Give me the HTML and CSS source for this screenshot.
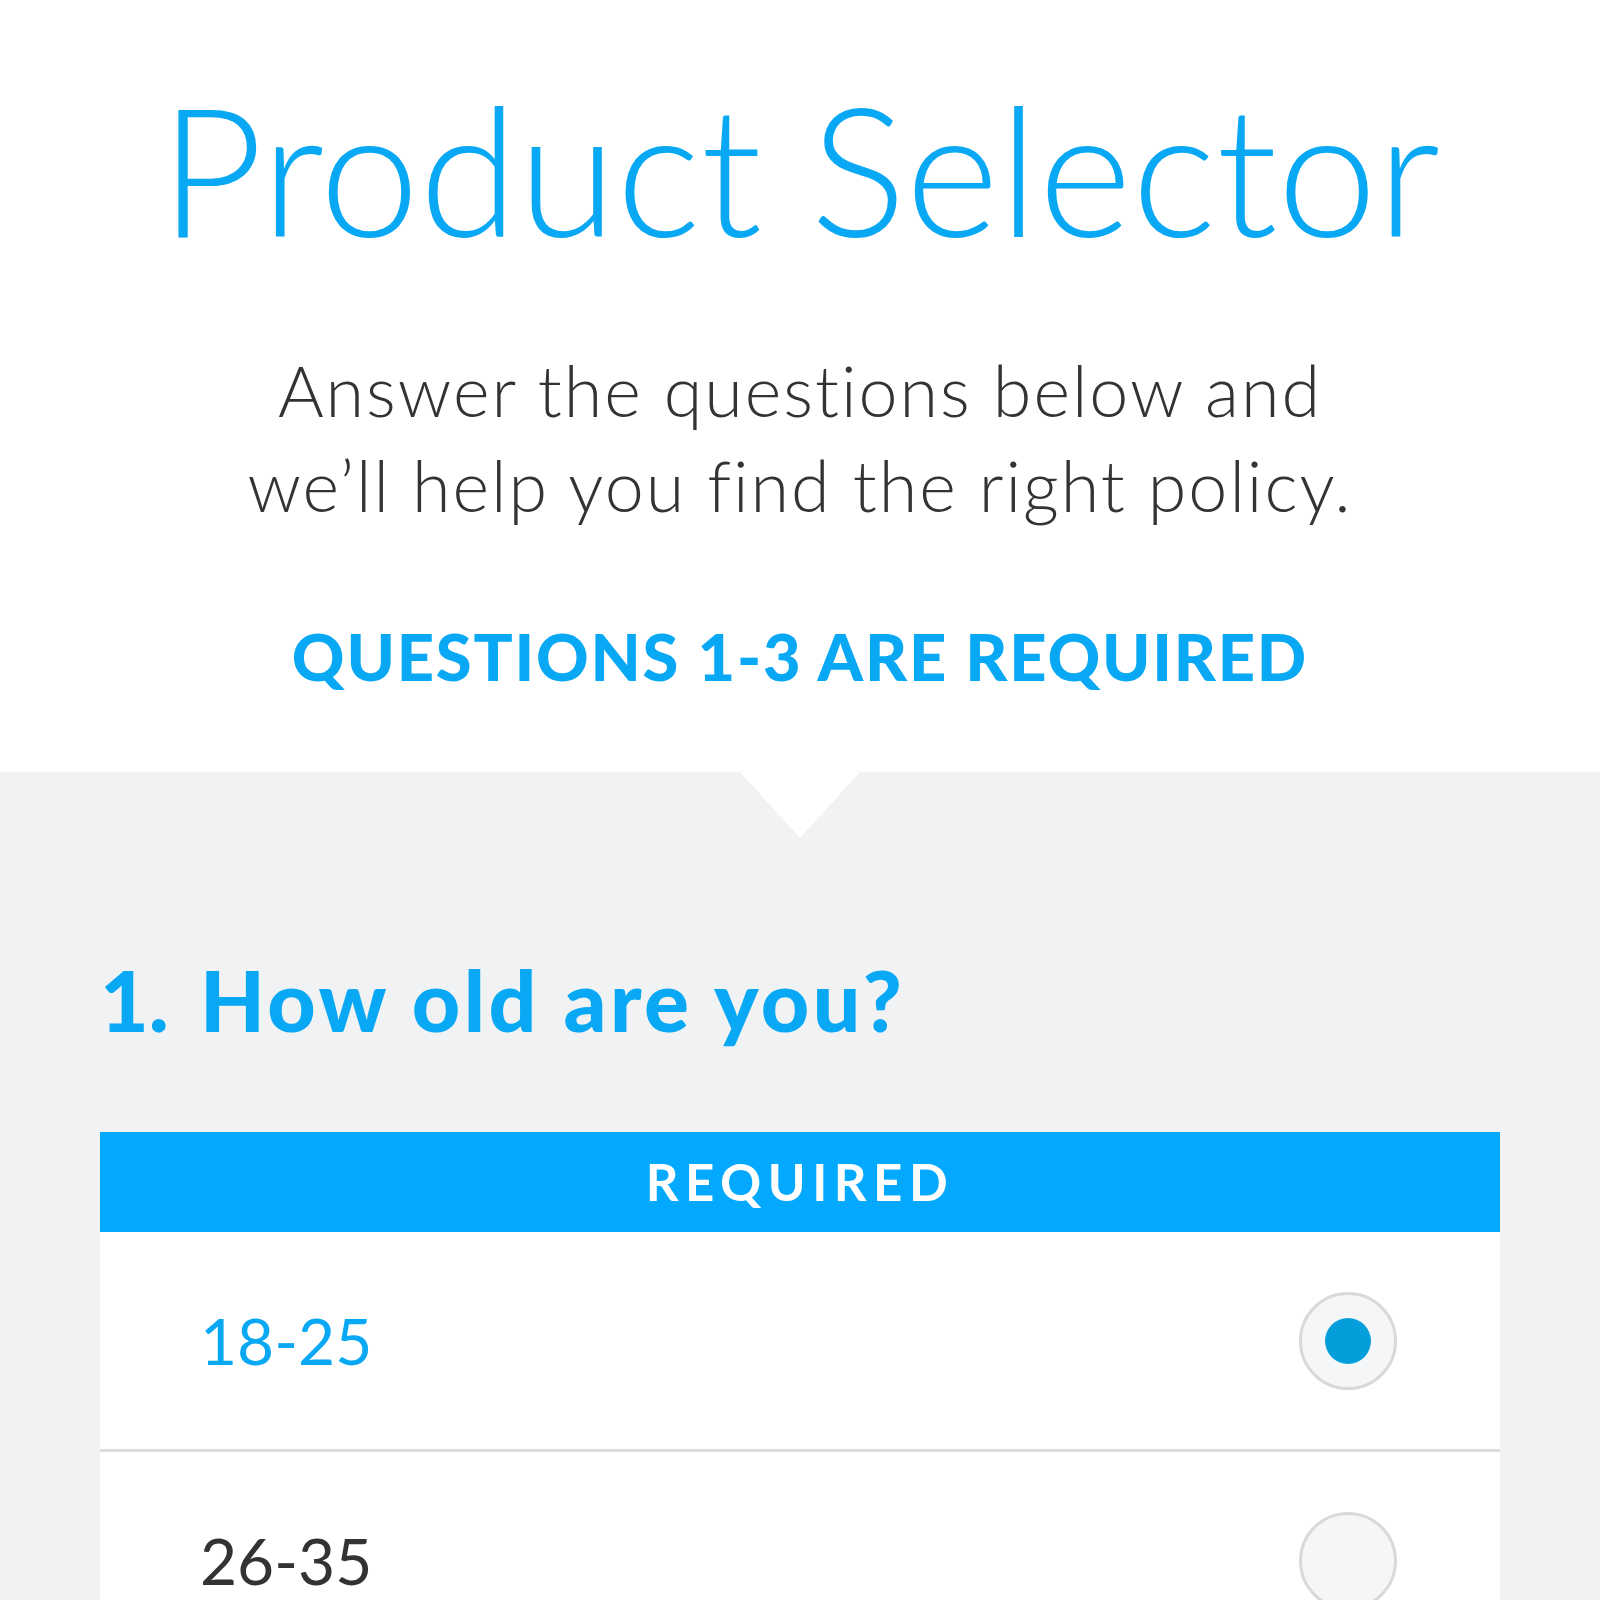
FILE: index.html
```html
<!DOCTYPE html>
<html lang="en">
<head>
<meta charset="utf-8">
<title>Product Selector</title>
<link rel="stylesheet" href="styles.css">
</head>
<body>
<header class="intro">
  <h1 class="title">Product Selector</h1>
  <p class="lead">Answer the questions below and<br>we’ll help you find the right policy.</p>
  <p class="notice">QUESTIONS 1-3 ARE REQUIRED</p>
</header>
<main class="questions">
  <section class="question">
    <h2 class="question-title"><span class="q-num">1.</span><span class="q-text">How old are you?</span></h2>
    <div class="card">
      <div class="card-bar">REQUIRED</div>
      <label class="option option-selected">
        <span class="option-label">18-25</span>
        <span class="radio radio-on"><span class="radio-dot"></span></span>
      </label>
      <label class="option">
        <span class="option-label">26-35</span>
        <span class="radio"></span>
      </label>
    </div>
  </section>
</main>
</body>
</html>
```
FILE: styles.css
```css
html, body {
  margin: 0;
  padding: 0;
  background: #f1f2f4;
}
body {
  font-family: "Lato", "Liberation Sans", sans-serif;
  width: 1600px;
  overflow: hidden;
}
.intro {
  position: relative;
  background: #ffffff;
  padding: 83px 0 83px;
  text-align: center;
}
.intro::after {
  content: "";
  position: absolute;
  left: 740px;
  bottom: -66px;
  width: 0;
  height: 0;
  border-left: 60px solid transparent;
  border-right: 60px solid transparent;
  border-top: 66px solid #ffffff;
}
.title {
  margin: 0;
  font-size: 179px;
  line-height: 169px;
  font-weight: 300;
  color: #08a8f4;
  letter-spacing: 0;
}
.lead {
  margin: 91px 0 0;
  font-size: 70px;
  line-height: 95px;
  font-weight: 300;
  color: #333333;
  letter-spacing: 2px;
}
.notice {
  margin: 91px 0 0;
  font-size: 65px;
  line-height: 1;
  font-weight: 900;
  color: #08a8f4;
  letter-spacing: 1.8px;
}
.questions {
  padding: 186px 100px 0;
}
.question-title {
  display: flex;
  margin: 0;
  font-size: 84px;
  line-height: 1;
  font-weight: 900;
  color: #08a8f4;
}
.q-num {
  width: 100px;
  flex: none;
}
.q-text {
  letter-spacing: 3.5px;
}
.card {
  margin-top: 90px;
  background: #ffffff;
}
.card-bar {
  height: 100px;
  background: #02a9fe;
  color: #ffffff;
  text-align: center;
  font-size: 51px;
  line-height: 100px;
  font-weight: 700;
  letter-spacing: 6.5px;
}
.option {
  display: flex;
  align-items: center;
  justify-content: space-between;
  height: 217px;
  padding: 0 103px 0 100px;
  border-bottom: 3px solid #dcdcdc;
  box-sizing: content-box;
}
.option-label {
  font-size: 64px;
  font-weight: 400;
  color: #333333;
}
.option-selected .option-label {
  color: #08a8f4;
}
.radio {
  width: 92px;
  height: 92px;
  border: 3px solid #d9d9d9;
  border-radius: 50%;
  background: #f5f6f8;
  display: flex;
  align-items: center;
  justify-content: center;
}
.radio-dot {
  width: 46px;
  height: 46px;
  border-radius: 50%;
  background: #049fdb;
}
```
